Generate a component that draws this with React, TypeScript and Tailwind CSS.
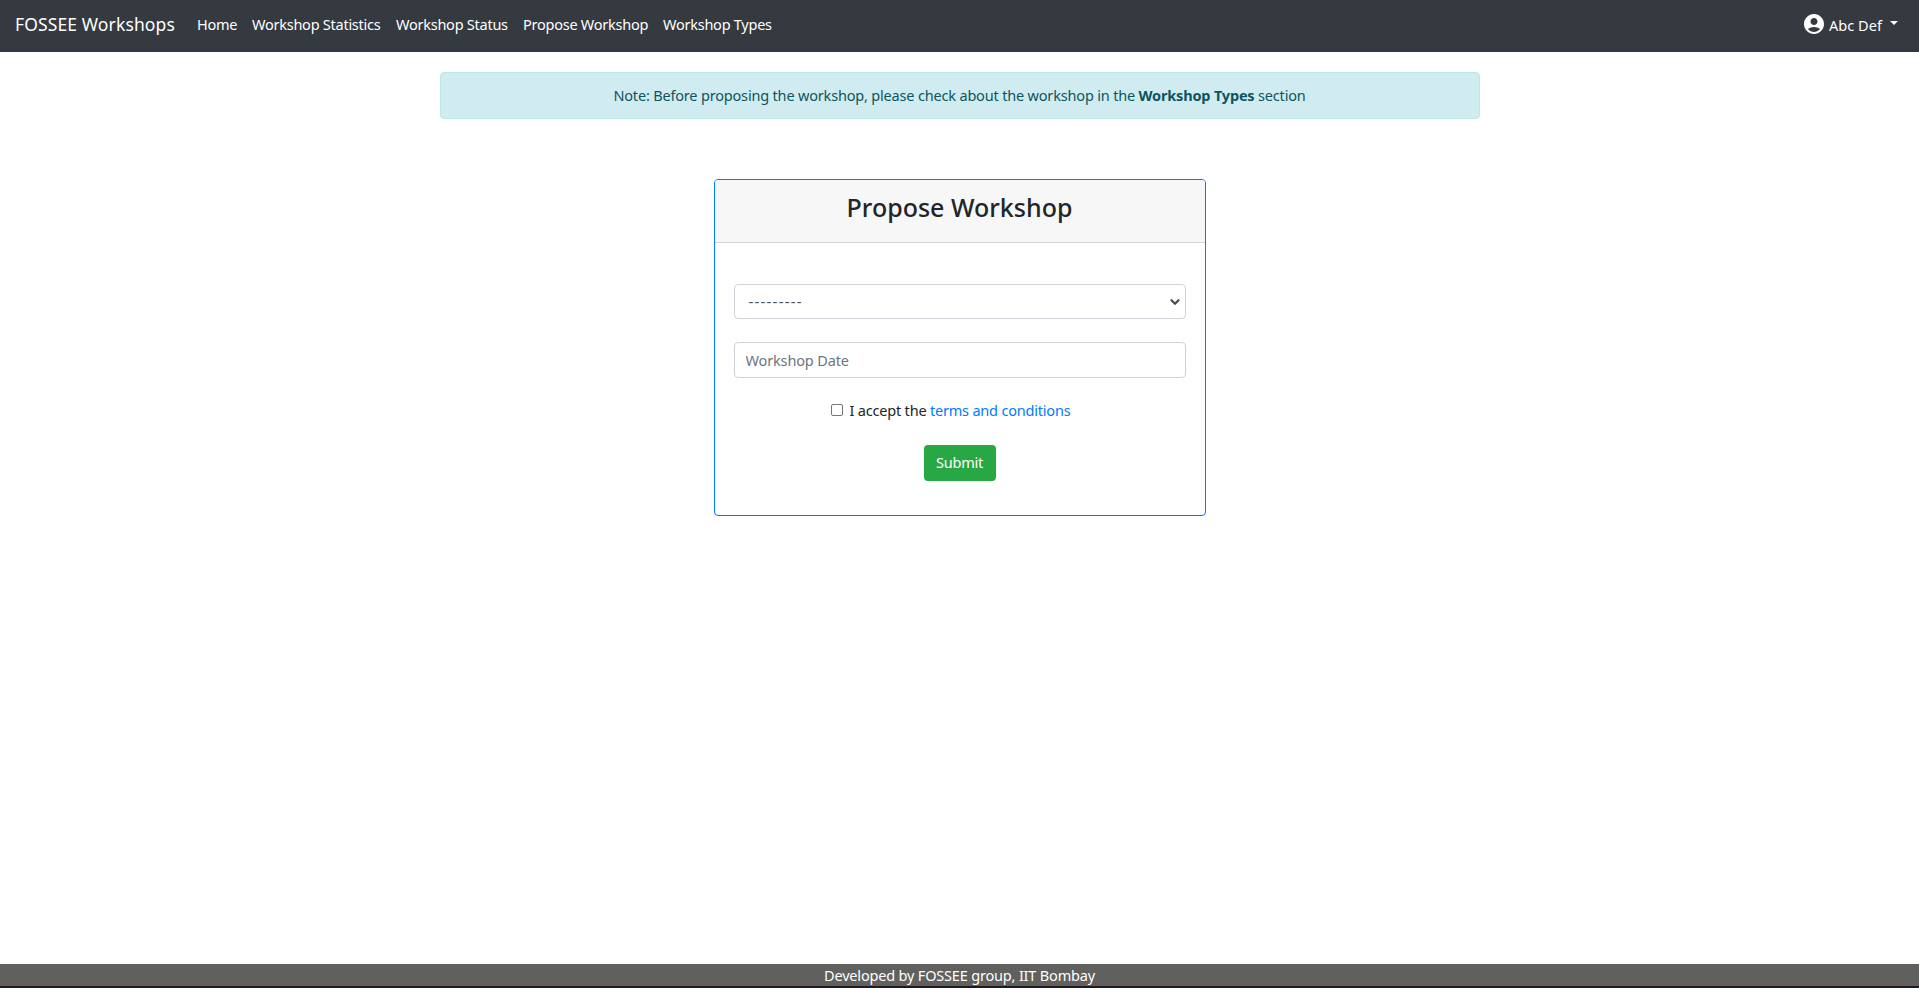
import React from 'react';
import { ChevronDown } from 'lucide-react';
import { MdAccountCircle } from 'react-icons/md';

const links = [
  { label: 'Home', width: 'w-[40px]' },
  { label: 'Workshop Statistics', width: 'w-[129px]' },
  { label: 'Workshop Status', width: 'w-[112px]' },
  { label: 'Propose Workshop', width: 'w-[125px]' },
  { label: 'Workshop Types', width: 'w-[109px]' },
];

function Navbar() {
  return (
    <nav className="flex h-[52px] items-start bg-[#343a40] px-[15px] text-white">
      <a href="#" className="mt-[10px] w-[182px] whitespace-nowrap text-[17.5px] leading-[28px] tracking-[0.12px]">
        FOSSEE Workshops
      </a>
      <ul className="mt-[13px] flex gap-[15px]">
        {links.map((link) => (
          <li key={link.label} className={`${link.width} whitespace-nowrap text-[14.5px] leading-[23px] tracking-[-0.25px]`}>
            <a href="#">{link.label}</a>
          </li>
        ))}
      </ul>
      <a href="#" className="mt-[12px] mr-[6px] ml-auto flex items-start">
        <MdAccountCircle className="size-[24px]" />
        <span className="ml-[3px] mt-px text-[14.5px] leading-[24px] tracking-[0.05px]">Abc Def</span>
        <span className="mt-[9px] ml-[8px] border-x-4 border-t-4 border-x-transparent border-t-white" />
      </a>
    </nav>
  );
}

function ProposeCard() {
  return (
    <section className="mt-[60px] h-[337px] w-[492px] rounded-[4px] border border-[#007bff] bg-white">
      <header className="h-[63px] rounded-t-[3px] border-b border-[#d5d5d5] bg-[#f7f7f7] pt-[10px] text-center">
        <h2 className="text-[25px] leading-[34px] font-medium text-[#212529]">Propose Workshop</h2>
      </header>
      <form className="flex flex-col items-center px-[19px] pt-[41px]">
        <button type="button" className="flex h-[35px] w-full items-center justify-between rounded-[4px] border border-[#ced4da] pr-[3px] pl-[14px] text-[15px] text-[#495057]">
          <span className="tracking-[1.2px]">---------</span>
          <ChevronDown className="size-[14px]" strokeWidth={4} />
        </button>
        <input
          placeholder="Workshop Date"
          className="mt-[23px] h-[36px] w-full rounded-[4px] border border-[#ced4da] px-[11px] pb-px text-[14.5px] tracking-[-0.15px] placeholder:text-[#6c757d]"
        />
        <div className="mt-[21px] mr-[18px] flex h-[23px] items-center">
          <span className="mb-px size-[12px] rounded-[2px] border border-[#767676] bg-white" />
          <p className="ml-[7px] text-[14.5px] leading-[23px] tracking-[-0.2px] text-[#212529]">
            I accept the <a href="#" className="text-[#007bff]">terms and conditions</a>
          </p>
        </div>
        <button type="button" className="mt-[23px] h-[36px] w-[72px] rounded-[4px] bg-[#28a745] text-[14.5px] tracking-[-0.2px] text-white">
          Submit
        </button>
      </form>
    </section>
  );
}

export default function App() {
  return (
    <div className="flex h-screen flex-col bg-white font-['Noto_Sans','Open_Sans',sans-serif]">
      <Navbar />
      <main className="flex flex-1 flex-col items-center">
        <div className="mt-[20px] h-[47px] w-[1040px] rounded-[4px] border border-[#bee5eb] bg-[#d1ecf1] text-center text-[14.5px] leading-[44px] tracking-[-0.18px] text-[#0c5460]">
          Note: Before proposing the workshop, please check about the workshop in the <b className="font-bold">Workshop Types</b> section
        </div>
        <ProposeCard />
      </main>
      <footer className="h-[24px] border-b-2 border-[#211b20] bg-[#60605e] text-center text-[14.5px] leading-[22px] tracking-[-0.18px] text-white">
        Developed by FOSSEE group, IIT Bombay
      </footer>
    </div>
  );
}
